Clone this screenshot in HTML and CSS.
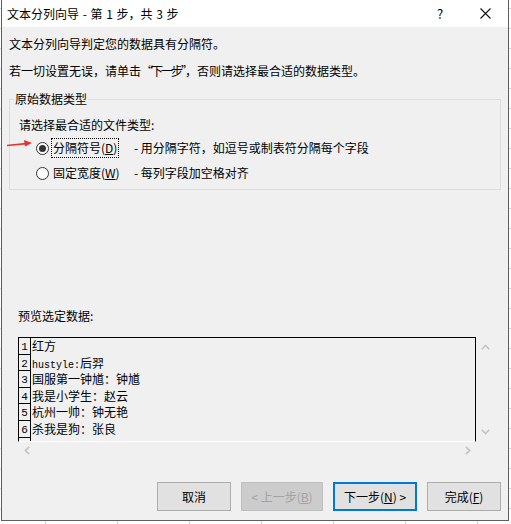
FILE: index.html
```html
<!DOCTYPE html>
<html lang="zh-CN">
<head>
    <meta charset="UTF-8">
    <title>文本分列向导</title>
    <link rel="stylesheet" href="styles.css">
</head>
<body>
    <div class="dialog">
        <div class="titlebar">
            <span class="title">文本分列向导 - 第 1 步，共 3 步</span>
            <span class="tb-btn help">?</span>
            <span class="tb-btn close">
                <svg width="11" height="11" viewBox="0 0 11 11"><path d="M0.5 0.5 L10.5 10.5 M10.5 0.5 L0.5 10.5" stroke="#111" stroke-width="1.1" fill="none"/></svg>
            </span>
        </div>
        <div class="content">
            <p class="intro">文本分列向导判定您的数据具有分隔符。</p>
            <p class="hint">若一切设置无误，请单击<span class="quote">“下一步”</span>，否则请选择最合适的数据类型。</p>

            <fieldset class="group">
                <legend>原始数据类型</legend>
                <p class="prompt">请选择最合适的文件类型:</p>
                <div class="option">
                    <svg class="marker" width="26" height="9" viewBox="0 0 26 9">
                        <path d="M0 6.5 L19 4.6" stroke="#e8342c" stroke-width="1.6" fill="none"/>
                        <path d="M25 4 L17 1 L18 7.5 Z" fill="#e8342c"/>
                    </svg>
                    <span class="radio checked"></span>
                    <span class="opt-label"><span class="focus">分隔符号(<u>D</u>)</span></span>
                    <span class="opt-desc">- 用分隔字符，如逗号或制表符分隔每个字段</span>
                </div>
                <div class="option">
                    <span class="radio"></span>
                    <span class="opt-label"><span class="plain">固定宽度(<u>W</u>)</span></span>
                    <span class="opt-desc">- 每列字段加空格对齐</span>
                </div>
            </fieldset>

            <p class="preview-label">预览选定数据:</p>
            <div class="preview">
                <div class="data-box">
                    <div class="data-row"><span class="num">1</span><span class="cell">红方</span></div>
                    <div class="data-row"><span class="num">2</span><span class="cell"><span class="latin">hustyle:</span>后羿</span></div>
                    <div class="data-row"><span class="num">3</span><span class="cell">国服第一钟馗：钟馗</span></div>
                    <div class="data-row"><span class="num">4</span><span class="cell">我是小学生：赵云</span></div>
                    <div class="data-row"><span class="num">5</span><span class="cell">杭州一帅：钟无艳</span></div>
                    <div class="data-row"><span class="num">6</span><span class="cell">杀我是狗：张良</span></div>
                    <div class="data-row"><span class="num"></span><span class="cell"></span></div>
                </div>
                <div class="vscroll">
                    <svg width="9" height="6" viewBox="0 0 9 6"><path d="M0.8 5.2 L4.5 1.3 L8.2 5.2" stroke="#c2c2c2" stroke-width="1.6" fill="none"/></svg>
                    <svg width="9" height="6" viewBox="0 0 9 6"><path d="M0.8 0.8 L4.5 4.7 L8.2 0.8" stroke="#c2c2c2" stroke-width="1.6" fill="none"/></svg>
                </div>
                <div class="hscroll">
                    <svg width="6" height="9" viewBox="0 0 6 9"><path d="M5.2 0.8 L1.3 4.5 L5.2 8.2" stroke="#c2c2c2" stroke-width="1.6" fill="none"/></svg>
                    <svg width="6" height="9" viewBox="0 0 6 9"><path d="M0.8 0.8 L4.7 4.5 L0.8 8.2" stroke="#c2c2c2" stroke-width="1.6" fill="none"/></svg>
                </div>
            </div>

            <div class="buttons">
                <button class="btn btn-cancel">取消</button>
                <button class="btn btn-back" disabled>&lt; 上一步(<u>B</u>)</button>
                <button class="btn btn-next">下一步(<u>N</u>) &gt;</button>
                <button class="btn btn-finish">完成(<u>F</u>)</button>
            </div>
        </div>
    </div>
</body>
</html>
```

FILE: styles.css
```css
* {
    margin: 0;
    padding: 0;
    box-sizing: border-box;
}
body {
    background-color: #ffffff;
    /* excel sheet grid behind the dialog */
    background-image:
        linear-gradient(to right, #d4d4d4 1px, transparent 1px),
        linear-gradient(to bottom, #d4d4d4 1px, transparent 1px);
    background-size: 72px 100%, 100% 20px;
    background-position: 45px 0, 0 8px;
    font-family: "Noto Sans CJK SC", "Noto Sans", sans-serif;
    font-size: 12px;
    line-height: 16px;
    color: #000000;
}
/* Dialog window */
.dialog {
    width: 508px;
    height: 521px;
    margin-left: 1px;
    background-color: #f0f0f0;
    border: 1px solid #5e5e5e;
    border-top: none;
}
.titlebar {
    height: 27px;
    background-color: #ffffff;
    display: flex;
    align-items: center;
}
.title {
    flex: 1;
    padding-left: 5px;
    word-spacing: 1px;
}
.tb-btn {
    height: 27px;
    display: flex;
    align-items: center;
    justify-content: center;
}
.help {
    width: 44px;
    font-size: 13px;
}
.close {
    width: 46px;
}
/* Content */
.content {
    padding: 9px 7px 0 7px;
}
.hint {
    margin-top: 11px;
}
.quote {
    letter-spacing: -2px;
}
.group {
    margin-top: 12px;
    border: 1px solid #dcdcdc;
    padding: 0 0 6px 9px;
}
.group legend {
    margin-left: -5px;
    padding: 0 1px;
}
.prompt {
    margin-top: 10px;
}
.option {
    position: relative;
    margin-top: 5px;
    height: 20px;
    display: flex;
    align-items: center;
    padding-left: 17px;
}
.marker {
    position: absolute;
    left: -12px;
    top: 1px;
}
.radio {
    width: 13px;
    height: 13px;
    border: 1px solid #333333;
    border-radius: 50%;
    background-color: #ffffff;
    display: flex;
    align-items: center;
    justify-content: center;
    margin-right: 2px;
}
.radio.checked::after {
    content: "";
    width: 7px;
    height: 7px;
    border-radius: 50%;
    background-color: #333333;
}
.opt-label {
    width: 83px;
    display: flex;
}
.focus {
    border: 1px dotted #000000;
    padding: 1px 1px;
    line-height: 16px;
}
.plain {
    border: 1px solid transparent;
    padding: 1px 1px;
}
/* Preview */
.preview-label {
    margin-top: 118px;
    padding-left: 9px;
}
.preview {
    margin-top: 13px;
    margin-left: 9px;
    display: grid;
    grid-template-columns: 458px 19px;
    grid-template-rows: 105px 17px;
}
.data-box {
    border: 1px solid #000000;
    border-bottom-color: #ffffff;
    overflow: hidden;
}
.data-row {
    display: flex;
    height: 16.6px;
}
.num {
    width: 12px;
    border-right: 1px solid #000000;
    border-bottom: 1px solid #000000;
    font-family: "Liberation Mono", monospace;
    font-size: 11px;
    line-height: 18px;
    text-align: center;
    flex-shrink: 0;
}
.cell {
    padding-left: 1px;
    line-height: 16.6px;
    white-space: nowrap;
}
.latin {
    font-family: "Liberation Mono", monospace;
    font-size: 10px;
}
.vscroll {
    display: flex;
    flex-direction: column;
    justify-content: space-between;
    align-items: center;
    padding: 7px 0;
}
.hscroll {
    grid-column: 1;
    display: flex;
    justify-content: space-between;
    align-items: center;
    padding: 0 5px 0 6px;
}
/* Buttons */
.buttons {
    margin-top: 23px;
    display: flex;
    justify-content: flex-end;
    gap: 10px;
}
.btn {
    height: 29px;
    background-color: #e1e1e1;
    border: 1px solid #adadad;
    font-family: "Noto Sans CJK SC", "Noto Sans", sans-serif;
    font-size: 12px;
    color: #000000;
}
.btn-cancel,
.btn-finish {
    width: 74px;
}
.btn-back {
    width: 82px;
    background-color: #cccccc;
    border-color: #bfbfbf;
    color: #a3a3a3;
}
.btn-next {
    width: 84px;
    border: 2px solid #0078d7;
}
```
